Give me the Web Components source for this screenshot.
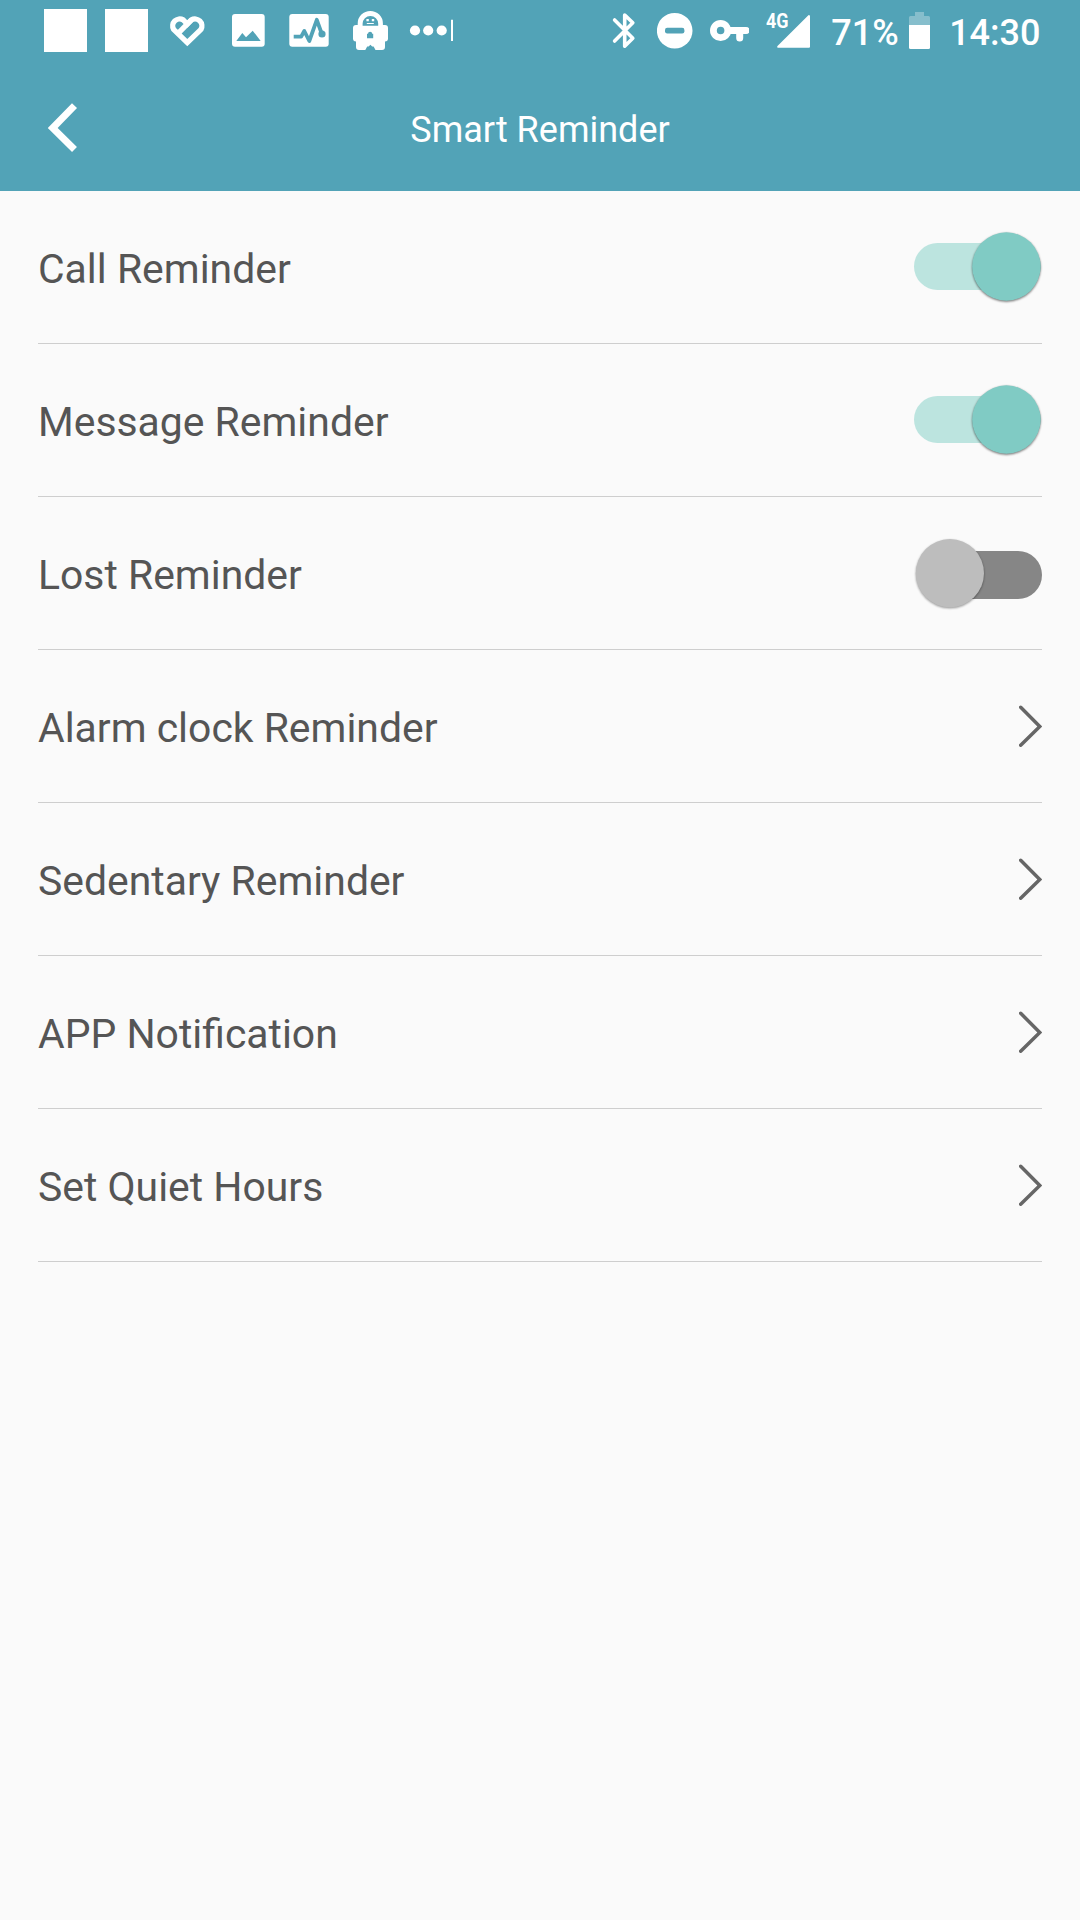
<!DOCTYPE html>
<html lang="en">
<head>
<meta charset="utf-8">
<title>Smart Reminder</title>
<style>
  body {
    margin: 0;
    background: #fafafa;
    font-family: Roboto, sans-serif;
  }
</style>
</head>
<body>
<reminder-screen></reminder-screen>

<script>
const define = (name, html) => {
  customElements.define(name, class extends HTMLElement {
    constructor() {
      super();
      this.attachShadow({ mode: 'open' }).innerHTML = html;
    }
  });
}

// every status icon is drawn in a box as high as the bar
const statusIcons = {
  square: [61, '<path d="M9 9h43v43H9z"/>'],
  heart: [61, `<g fill="none" stroke="#fff" stroke-width="5.3">
    <path d="M30.3 42.6L16.6 29.4A7 7 0 0 1 26.2 19.9L30.3 24L34.4 19.9A7 7 0 0 1 44 29.4Z"/>
    <path d="M34.4 19.9L21.6 32.8"/></g>`],
  image: [61, `<rect x="14" y="14" width="32.7" height="32.7" rx="3"/>
    <path fill="#52a3b7" d="M18.3 41L24.3 33L28 37.3L34.7 30.7L42.7 41z"/>`],
  pulse: [61, `<rect x="10.3" y="14" width="39.4" height="32.7" rx="3"/>
    <path fill="none" stroke="#52a3b7" stroke-width="3.8" stroke-linejoin="round" d="M14.7 36.7H22.2L25.3 31L30.3 41L37.8 19.8L42.5 33"/>
    <circle fill="#52a3b7" cx="43" cy="34" r="3.6"/>`],
  lock: [61, `<path d="M17.7 25V23.5a12.6 12.6 0 0 1 25.2 0V25h2.1a3 3 0 0 1 3 3V38.5a3 3 0 0 1-3 3V47a3 3 0 0 1-3 3H35.5L33.6 46.5H32.2L30.4 44.8L28.6 46.5H27.2L25.3 50H19a3 3 0 0 1-3-3V41.5a3 3 0 0 1-3-3V28a3 3 0 0 1 3-3z"/>
    <path fill="#52a3b7" d="M22.6 25.8V23.8a7.8 7.8 0 0 1 15.6 0V25.8zM27 33.8H28A2.1 2 0 0 1 32.2 33.8H33.2V38.2H27z"/>
    <path d="M26.4 19h2.4v2.3h-2.4zM31.8 19h2.4v2.3h-2.4zM26.8 23.1h7v1h-7z"/>`],
  more: [61, `<circle cx="14" cy="30.5" r="5.1"/><circle cx="27.2" cy="30.5" r="5.1"/><circle cx="40.7" cy="30.5" r="5.1"/>
    <path d="M50 19.7h2V41h-2z"/>`],
  bluetooth: [24, '<path fill="none" stroke="#fff" stroke-width="3.6" stroke-linecap="round" stroke-linejoin="round" d="M2.6 20L20.8 38.3L12.7 46.2V15L20.8 22.8L2.6 41"/>'],
  dnd: [36, '<circle cx="17.7" cy="30.7" r="17.8"/><rect fill="#52a3b7" x="8" y="27.8" width="19.4" height="5.6" rx="2.2"/>'],
  key: [39, `<circle cx="10.6" cy="30.5" r="7.2" fill="none" stroke="#fff" stroke-width="6.8"/>
    <path d="M17 27H36a3.4 3.4 0 0 1 0 7H33.2V38a3.4 3.4 0 0 1-7 0V34H17z"/>`],
  signal: [44, `<text x="0" y="28.4" font-size="20.5" font-weight="700" textLength="22.5" lengthAdjust="spacingAndGlyphs">4G</text>
    <path d="M12.2 47.8a1 1 0 0 1-.7-1.7L42.4 15.3a1 1 0 0 1 1.6.7V46.8a1 1 0 0 1-1 1z"/>`],
  battery: [21, `<path fill-opacity=".3" d="M6 12H15V16H19.5a1.5 1.5 0 0 1 1.5 1.5V25H0V17.5A1.5 1.5 0 0 1 1.5 16H6z"/>
    <path d="M0 25H21V47.5a1.5 1.5 0 0 1-1.5 1.5H1.5A1.5 1.5 0 0 1 0 47.5z"/>`]
};

customElements.define('status-icon', class extends HTMLElement {
  constructor() {
    super();
    this.attachShadow({ mode: 'open' });
  }

  connectedCallback() {
    const [width, shapes] = statusIcons[this.getAttribute('name')];
    this.shadowRoot.innerHTML = `
      <style>
        :host { display: block; flex: none; }
        svg { display: block; fill: #fff; }
      </style>
      <svg width="${width}" height="64" viewBox="0 0 ${width} 64">${shapes}</svg>
    `;
  }
});

define('status-bar', `
  <style>
    :host {
      display: flex;
      justify-content: space-between;
      height: 64px;
      padding: 0 39.5px 0 35px;
      color: #fff;
      font-size: 36px;
      font-weight: 500;
      line-height: 67px;
    }
    .group { display: flex; }
    .system { gap: 17px; }
    .system > :nth-child(2) { margin-left: 4px; }
    .power { display: flex; gap: 10px; margin-left: 4px; }
    .clock { margin-left: 2.5px; }
  </style>
  <div class="group">
    <status-icon name="square"></status-icon>
    <status-icon name="square"></status-icon>
    <status-icon name="heart"></status-icon>
    <status-icon name="image"></status-icon>
    <status-icon name="pulse"></status-icon>
    <status-icon name="lock"></status-icon>
    <status-icon name="more"></status-icon>
  </div>
  <div class="group system">
    <status-icon name="bluetooth"></status-icon>
    <status-icon name="dnd"></status-icon>
    <status-icon name="key"></status-icon>
    <status-icon name="signal"></status-icon>
    <div class="power"><span>71%</span><status-icon name="battery"></status-icon></div>
    <span class="clock">14:30</span>
  </div>
`);

define('title-bar', `
  <style>
    :host {
      display: grid;
      grid-template-columns: 120px 1fr 120px;
      align-items: center;
      height: 127px;
      color: #fff;
    }
    svg { display: block; margin-left: 46px; }
    h1 {
      margin: 0;
      padding-top: 4px;
      font-size: 36px;
      font-weight: 400;
      line-height: 42px;
      text-align: center;
    }
  </style>
  <svg width="34" height="50" viewBox="0 0 34 50" fill="none" stroke="#fff" stroke-width="7">
    <path d="M28.5 2.6L6.7 25L28.5 46.6"/>
  </svg>
  <h1><slot></slot></h1>
`);

define('toggle-switch', `
  <style>
    :host { display: block; }
    svg { display: block; overflow: visible; }
    .on, .off { display: none; }
    :host([checked]) .on, :host(:not([checked])) .off { display: block; }
    .on circle { filter: drop-shadow(0 1px 1px rgba(0, 0, 0, .55)); }
    .off circle { filter: drop-shadow(0 1px 1px rgba(0, 0, 0, .4)); }
  </style>
  <svg width="128" height="152">
    <g class="on">
      <rect y="52" width="127" height="47" rx="23.5" fill="#bce4df"/>
      <circle cx="92.4" cy="75.5" r="34.2" fill="#80cbc4"/>
    </g>
    <g class="off">
      <rect x="5" y="54" width="123" height="48" rx="24" fill="#868686"/>
      <circle cx="35.9" cy="76.2" r="34.1" fill="#bdbdbd"/>
    </g>
  </svg>
`);

define('chevron-right', `
  <style>
    :host { display: block; }
    svg { display: block; }
  </style>
  <svg width="23" height="42" viewBox="0 0 23 42" fill="none" stroke="#666" stroke-width="3.5" stroke-linecap="round">
    <path d="M1.7 2.3L20.8 21.4L1.7 40.2"/>
  </svg>
`);

define('reminder-row', `
  <style>
    :host {
      display: flex;
      align-items: center;
      justify-content: space-between;
      height: 152px;
      border-bottom: 1px solid #cecece;
      color: #555;
      font-size: 40.9px;
      line-height: 50px;
    }
    .label { padding-top: 3px; }
  </style>
  <span class="label"><slot></slot></span>
  <slot name="control"></slot>
`);

define('reminder-screen', `
  <style>
    :host { display: block; min-height: 1920px; }
    header { background: #52a3b7; }
    main { padding: 0 38px; }
  </style>
  <header>
    <status-bar></status-bar>
    <title-bar>Smart Reminder</title-bar>
  </header>
  <main>
    <reminder-row>Call Reminder<toggle-switch slot="control" checked></toggle-switch></reminder-row>
    <reminder-row>Message Reminder<toggle-switch slot="control" checked></toggle-switch></reminder-row>
    <reminder-row>Lost Reminder<toggle-switch slot="control"></toggle-switch></reminder-row>
    <reminder-row>Alarm clock Reminder<chevron-right slot="control"></chevron-right></reminder-row>
    <reminder-row>Sedentary Reminder<chevron-right slot="control"></chevron-right></reminder-row>
    <reminder-row>APP Notification<chevron-right slot="control"></chevron-right></reminder-row>
    <reminder-row>Set Quiet Hours<chevron-right slot="control"></chevron-right></reminder-row>
  </main>
`);
</script>
</body>
</html>
